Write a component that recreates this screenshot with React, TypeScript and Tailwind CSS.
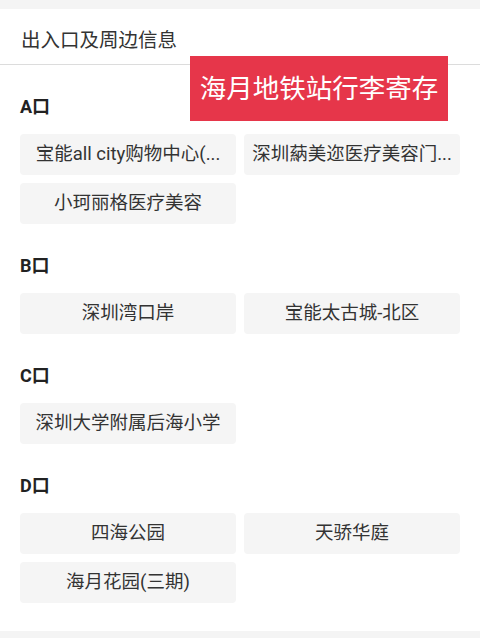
const sections: { name: string; places: string[] }[] = [
  { name: 'A口', places: ['宝能all city购物中心(...', '深圳蒳美迩医疗美容门...', '小珂丽格医疗美容'] },
  { name: 'B口', places: ['深圳湾口岸', '宝能太古城-北区'] },
  { name: 'C口', places: ['深圳大学附属后海小学'] },
  { name: 'D口', places: ['四海公园', '天骄华庭', '海月花园(三期)'] },
];

function Exit({ name, places }: { name: string; places: string[] }) {
  return (
    <section className="px-5 pt-[30px]">
      <h3 className="mb-[15px] h-6 text-[18px] font-bold leading-6 text-[#222]">{name}</h3>
      <div className="grid grid-cols-2 gap-2">
        {places.map((p) => (
          <div
            key={p}
            className="flex h-[41px] items-center justify-center overflow-hidden whitespace-nowrap rounded-[4px] bg-[#f5f5f5] px-2 text-[18.5px] text-[#333]"
          >
            {p}
          </div>
        ))}
      </div>
    </section>
  );
}

export default function App() {
  return (
    <div
      className="relative min-h-[639px] w-[480px] bg-white"
      style={{ fontFamily: 'Roboto, "Noto Sans CJK SC", sans-serif' }}
    >
      <div className="h-[9px] bg-[#f4f4f4]" />
      <header className="flex h-[56px] items-center border-b border-[#dcdcdc] px-[21px] pt-2 text-[19.5px] text-[#333]">
        出入口及周边信息
      </header>

      <div className="absolute left-[190px] top-[56px] flex h-[65px] w-[258px] items-center justify-center bg-[#e6364a] text-[26.5px] font-normal text-white">
        海月地铁站行李寄存
      </div>

      <div className="pb-[28px]">
        {sections.map((s) => (
          <Exit key={s.name} name={s.name} places={s.places} />
        ))}
      </div>
      <div className="h-[7px] bg-[#f4f4f4]" />
    </div>
  );
}
